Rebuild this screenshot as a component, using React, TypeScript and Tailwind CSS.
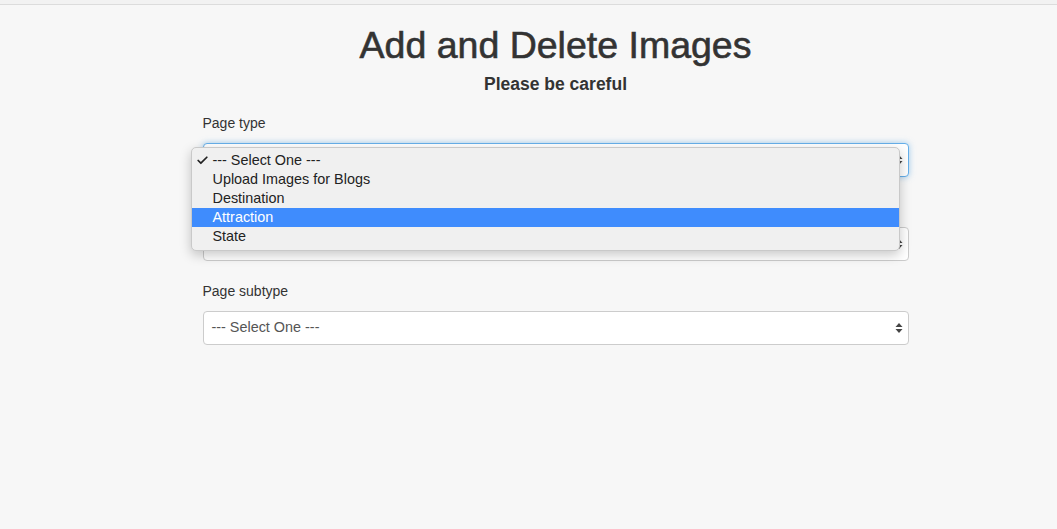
import { Check } from 'lucide-react';

const options = ['--- Select One ---', 'Upload Images for Blogs', 'Destination', 'Attraction', 'State'];

function Arrows() {
  return (
    <svg width="8" height="12" viewBox="0 0 8 12" className="absolute right-[5px] top-1/2 -translate-y-1/2">
      <path d="M4 1 L7.5 5 L0.5 5 Z" fill="#444" />
      <path d="M4 11 L7.5 7 L0.5 7 Z" fill="#444" />
    </svg>
  );
}

function FakeSelect({ focused = false, value = '--- Select One ---' }: { focused?: boolean; value?: string }) {
  return (
    <div
      className={
        focused
          ? 'relative h-[34px] rounded-[4px] border border-[#66afe9] bg-white px-3 flex items-center text-[14px] text-[#555] shadow-[0_0_6px_rgba(102,175,233,0.6)]'
          : 'relative h-[34px] rounded-[4px] border border-[#ccc] bg-white px-[8px] flex items-center text-[14.4px] text-[#555]'
      }
    >
      {value}
      <Arrows />
    </div>
  );
}

export default function App() {
  return (
    <div className="min-h-[529px] bg-[#f7f7f7] font-['Liberation_Sans',Arial,sans-serif] text-[#333]">
      <div className="h-[5px] bg-[#f2f2f2] border-b border-[#dcdcdc]" />
      <div className="pl-[54px]">
        <div className="relative mx-auto w-[706px]">
          <h1 className="pt-[20px] text-center text-[37.5px] leading-[40px] font-normal [-webkit-text-stroke:0.6px_#333]">Add and Delete Images</h1>
          <h4 className="mt-[9px] text-center text-[17.5px] leading-[20px] font-bold">Please be careful</h4>

          <div className="mt-[19px]">
            <label className="block text-[14px] leading-[20px] mb-[10px]">Page type</label>
            <FakeSelect focused value="" />
          </div>

          {/* label hidden under the open dropdown */}
          <div className="mt-[20px]">
            <label className="invisible block text-[14px] leading-[20px] mb-[10px]">Page name</label>
            <FakeSelect value="" />
          </div>

          <div className="mt-[20px]">
            <label className="block text-[14px] leading-[20px] mb-[10px]">Page subtype</label>
            <FakeSelect />
          </div>

          <div className="absolute left-[-12px] top-[142px] w-[709px] rounded-[5px] border border-[#c9c9c9] bg-[#f0f0f0] pt-[3px] pb-[4px] shadow-[0_4px_12px_rgba(0,0,0,0.22)]">
            {options.map((o, i) => (
              <div
                key={o}
                className={
                  i === 3
                    ? 'relative h-[19px] pl-[21px] flex items-center text-[14.4px] bg-[#3f8cfd] text-white'
                    : 'relative h-[19px] pl-[21px] flex items-center text-[14.4px] text-[#222]'
                }
              >
                {i === 0 && <Check className="absolute left-[4px] w-[13px] h-[13px]" strokeWidth={3.2} />}
                {o}
              </div>
            ))}
          </div>
        </div>
      </div>
    </div>
  );
}
